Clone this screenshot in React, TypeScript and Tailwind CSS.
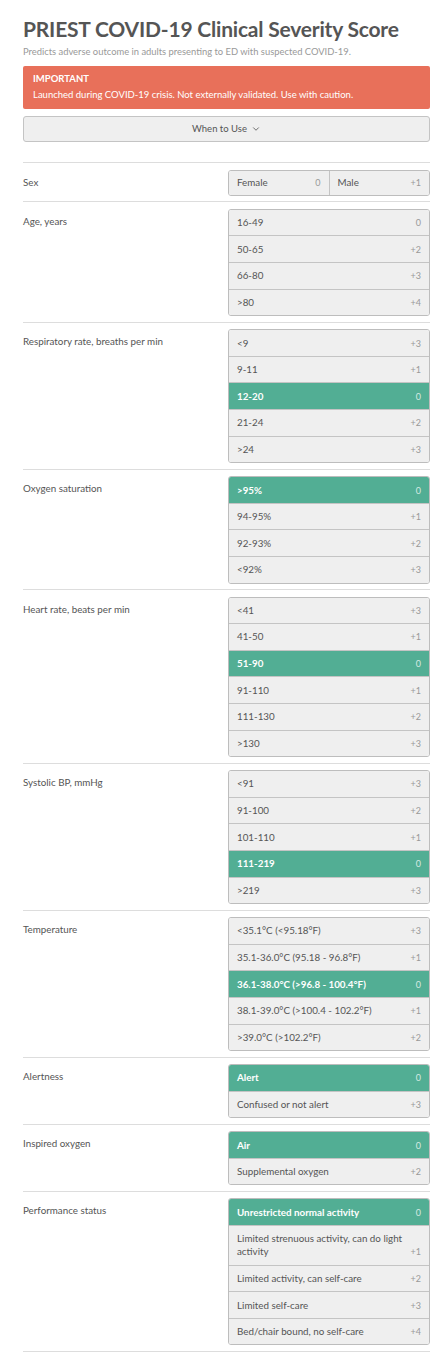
import { ChevronDown } from "lucide-react";

type Opt = { label: string; score: string; selected?: boolean };
type Section = { title: string; options: Opt[]; inline?: boolean };

const SECTIONS: Section[] = [
  {
    title: "Sex",
    inline: true,
    options: [
      { label: "Female", score: "0" },
      { label: "Male", score: "+1" },
    ],
  },
  {
    title: "Age, years",
    options: [
      { label: "16-49", score: "0" },
      { label: "50-65", score: "+2" },
      { label: "66-80", score: "+3" },
      { label: ">80", score: "+4" },
    ],
  },
  {
    title: "Respiratory rate, breaths per min",
    options: [
      { label: "<9", score: "+3" },
      { label: "9-11", score: "+1" },
      { label: "12-20", score: "0", selected: true },
      { label: "21-24", score: "+2" },
      { label: ">24", score: "+3" },
    ],
  },
  {
    title: "Oxygen saturation",
    options: [
      { label: ">95%", score: "0", selected: true },
      { label: "94-95%", score: "+1" },
      { label: "92-93%", score: "+2" },
      { label: "<92%", score: "+3" },
    ],
  },
  {
    title: "Heart rate, beats per min",
    options: [
      { label: "<41", score: "+3" },
      { label: "41-50", score: "+1" },
      { label: "51-90", score: "0", selected: true },
      { label: "91-110", score: "+1" },
      { label: "111-130", score: "+2" },
      { label: ">130", score: "+3" },
    ],
  },
  {
    title: "Systolic BP, mmHg",
    options: [
      { label: "<91", score: "+3" },
      { label: "91-100", score: "+2" },
      { label: "101-110", score: "+1" },
      { label: "111-219", score: "0", selected: true },
      { label: ">219", score: "+3" },
    ],
  },
  {
    title: "Temperature",
    options: [
      { label: "<35.1°C (<95.18°F)", score: "+3" },
      { label: "35.1-36.0°C (95.18 - 96.8°F)", score: "+1" },
      { label: "36.1-38.0°C (>96.8 - 100.4°F)", score: "0", selected: true },
      { label: "38.1-39.0°C (>100.4 - 102.2°F)", score: "+1" },
      { label: ">39.0°C (>102.2°F)", score: "+2" },
    ],
  },
  {
    title: "Alertness",
    options: [
      { label: "Alert", score: "0", selected: true },
      { label: "Confused or not alert", score: "+3" },
    ],
  },
  {
    title: "Inspired oxygen",
    options: [
      { label: "Air", score: "0", selected: true },
      { label: "Supplemental oxygen", score: "+2" },
    ],
  },
  {
    title: "Performance status",
    options: [
      { label: "Unrestricted normal activity", score: "0", selected: true },
      { label: "Limited strenuous activity, can do light activity", score: "+1" },
      { label: "Limited activity, can self-care", score: "+2" },
      { label: "Limited self-care", score: "+3" },
      { label: "Bed/chair bound, no self-care", score: "+4" },
    ],
  },
];

function Option({ opt, first, inline }: { opt: Opt; first: boolean; inline?: boolean }) {
  const sep = first ? "" : inline ? "border-l border-[#c4c4c4]" : "border-t border-[#c4c4c4]";
  return (
    <div
      className={`flex items-end justify-between gap-[6px] px-[8px] ${
        inline ? "flex-1 py-[5.7px]" : "py-[6.3px]"
      } ${sep} ${opt.selected ? "bg-[#52ae94] text-white font-bold" : "bg-[#efefef] text-[#555]"}`}
    >
      <span className="text-[9.8px] leading-[13px]">{opt.label}</span>
      <span
        className={`text-[9px] leading-[13px] font-normal shrink-0 ${
          opt.selected ? "text-white/75" : "text-[#999]"
        }`}
      >
        {opt.score}
      </span>
    </div>
  );
}

export default function App() {
  return (
    <div
      className="bg-white h-[1360px] overflow-hidden pl-[23px] pr-[12px] pt-[14px] text-[#555]"
      style={{ fontFamily: 'Lato, "Noto Sans", sans-serif' }}
    >
      <h1 className="text-[21px] leading-[30px] font-bold text-[#555] tracking-[-0.2px] whitespace-nowrap">
        PRIEST COVID-19 Clinical Severity Score
      </h1>
      <p className="text-[9.4px] leading-[13px] text-[#999] mt-[1px]">
        Predicts adverse outcome in adults presenting to ED with suspected COVID-19.
      </p>

      <div className="mt-[8px] bg-[#e8705a] rounded-[2px] px-[10px] pt-[5px] pb-[6px] text-white">
        <div className="text-[9.5px] leading-[15px] font-bold">IMPORTANT</div>
        <div className="text-[9.5px] leading-[17px]">
          Launched during COVID-19 crisis. Not externally validated. Use with caution.
        </div>
      </div>

      <div className="mt-[7px] h-[26px] rounded-[3px] border border-[#c4c4c4] bg-[#efefef] flex items-center justify-center gap-[4px] text-[9.5px] text-[#555]">
        <span>When to Use</span>
        <ChevronDown size={10} strokeWidth={2} />
      </div>

      <div className="mt-[20px] border-t border-[#ddd]">
        {SECTIONS.map((s) => (
          <div key={s.title} className="flex justify-between pt-[6.5px] pb-[5.5px] border-b border-[#ddd]">
            <div className="text-[9.8px] leading-[13px] pt-[6px] text-[#555]">{s.title}</div>
            <div
              className={`w-[202px] shrink-0 rounded-[3px] border border-[#bdbdbd] overflow-hidden ${
                s.inline ? "flex" : "flex flex-col"
              }`}
            >
              {s.options.map((o, i) => (
                <Option key={o.label} opt={o} first={i === 0} inline={s.inline} />
              ))}
            </div>
          </div>
        ))}
      </div>
    </div>
  );
}
